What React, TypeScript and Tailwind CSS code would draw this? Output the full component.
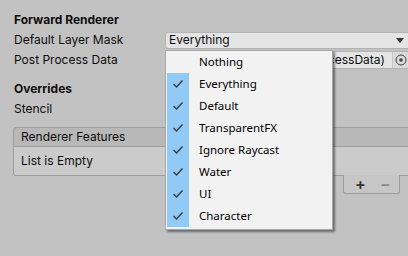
import React from "react";

const items = [
  { name: "Nothing", checked: false },
  { name: "Everything", checked: true },
  { name: "Default", checked: true },
  { name: "TransparentFX", checked: true },
  { name: "Ignore Raycast", checked: true },
  { name: "Water", checked: true },
  { name: "UI", checked: true },
  { name: "Character", checked: true },
];

function Check() {
  return (
    <svg width="12" height="10" viewBox="0 0 12 10">
      <path d="M1.5 5 L4.5 8 L10.5 1.5" fill="none" stroke="#3a3a3a" strokeWidth="1.4" />
    </svg>
  );
}

export default function App() {
  return (
    <div
      className="relative w-[408px] h-[256px] overflow-hidden bg-[#c2c2c2] text-[12px] text-[#0d0d0d]"
      style={{ fontFamily: "Inter, 'Noto Sans', sans-serif" }}
    >
      <div className="flex flex-col pt-[10px]">
        <div className="h-[20px] flex items-center pl-[14px] font-bold">Forward Renderer</div>
        <div className="h-[20px] flex items-center pl-[14px]">
          <span className="w-[151px] shrink-0">Default Layer Mask</span>
          <div className="flex-1 h-[17px] mr-[-10px] flex items-center bg-[#e4e4e4] border border-[#b2b2b2] rounded-[3px] pl-[3px] pr-[13px]">
            <span className="flex-1">Everything</span>
            <svg width="8" height="5" viewBox="0 0 8 5">
              <path d="M0 0 L8 0 L4 5 Z" fill="#333" />
            </svg>
          </div>
        </div>
        <div className="h-[20px] flex items-center pl-[14px]">
          <span className="w-[151px] shrink-0">Post Process Data</span>
          <div className="flex-1 h-[18px] mr-[-10px] flex items-center bg-[#e4e4e4] border border-[#b2b2b2] rounded-[3px] overflow-hidden">
            <span className="flex-1 pl-[13px] whitespace-nowrap">PostProcessData (PostProcessData)</span>
            <div className="w-[25px] h-full flex items-center pl-[2px] bg-[#dadada] border-l border-[#c6c6c6]">
              <svg width="12" height="12" viewBox="0 0 12 12">
                <circle cx="6" cy="6" r="5" fill="none" stroke="#444" strokeWidth="1" />
                <circle cx="6" cy="6" r="1.8" fill="#444" />
              </svg>
            </div>
          </div>
        </div>
        <div className="h-[9px]" />
        <div className="h-[20px] flex items-center pl-[14px] font-bold">Overrides</div>
        <div className="h-[20px] flex items-center pl-[14px]">Stencil</div>
        <div className="h-[8px]" />
        <div className="ml-[13px] w-[410px] flex flex-col">
          <div className="h-[20px] flex items-center pl-[7px] bg-[#b8b8b8] border border-[#9d9d9d] rounded-t-[3px]">
            Renderer Features
          </div>
          <div className="h-[29px] flex items-center pl-[7px] bg-[#cbcbcb] border-x border-b border-[#9d9d9d] rounded-b-[3px]">
            List is Empty
          </div>
          <div className="flex">
            <div className="ml-[330px] w-[57px] h-[19px] mt-[-1px] flex items-center bg-[#c6c6c6] border-x border-b border-[#9d9d9d] rounded-b-[3px]">
              <span className="w-[30px] pl-[11px] text-[16px] leading-none font-semibold text-[#333]">+</span>
              <span className="w-[24px] pl-[6px] text-[16px] leading-none font-semibold text-[#8a8a8a]">−</span>
            </div>
          </div>
        </div>
      </div>

      <div
        className="absolute left-[165px] top-[50px] w-[168px] h-[180px] bg-[#f2f2f2] border border-[#a8a8a8] shadow-[2px_2px_2px_rgba(0,0,0,0.45)] pl-[1px]"
        style={{ fontFamily: "'Noto Sans', sans-serif" }}
      >
        {items.map((it) => (
          <div key={it.name} className="h-[22px] flex items-center text-[11.5px] text-black">
            <div className={`w-[22px] h-full flex items-center justify-center ${it.checked ? "bg-[#91c9f7]" : ""}`}>
              {it.checked && <Check />}
            </div>
            <span className="pl-[10px]">{it.name}</span>
          </div>
        ))}
      </div>
    </div>
  );
}
